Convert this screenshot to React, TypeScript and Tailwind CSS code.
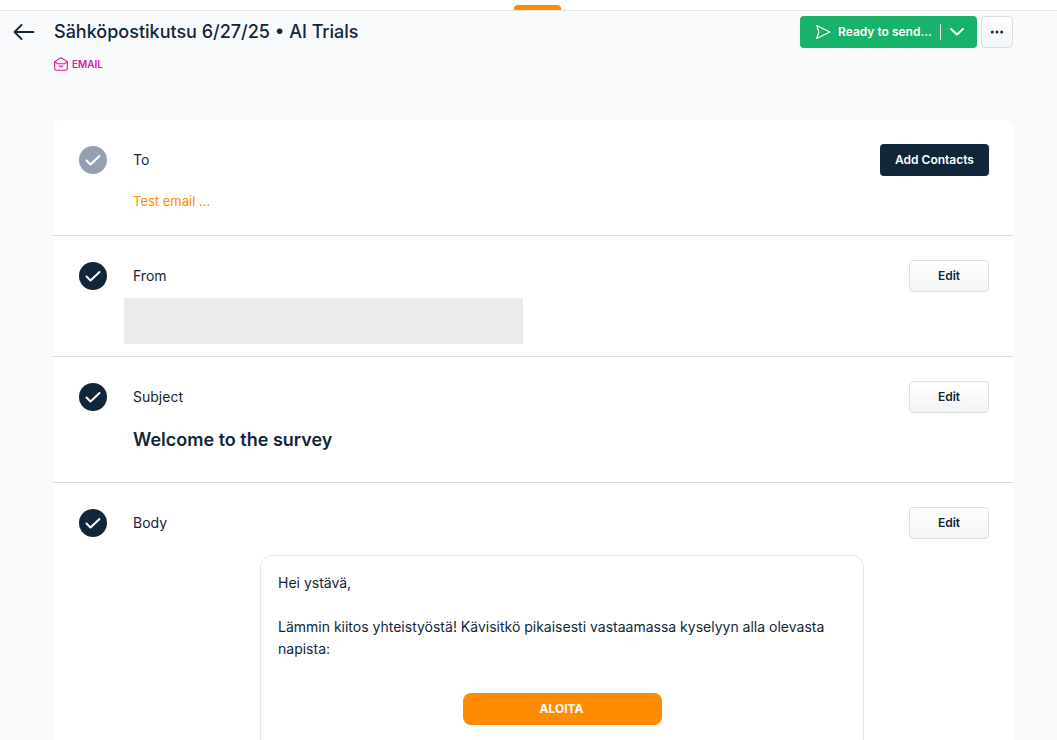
import { Ellipsis } from 'lucide-react';

const font = { fontFamily: 'Inter, sans-serif' };

function StepIcon({ muted }: { muted?: boolean }) {
    return (
        <div className={`${muted ? 'bg-[#94a0ad]' : 'bg-[#12263a]'} w-7 h-7 rounded-full flex items-center justify-center shrink-0`}>
            <svg className="w-4 h-4" viewBox="0 0 16 16" fill="none" stroke="white" strokeWidth="2" strokeLinecap="round" strokeLinejoin="round">
                <path d="M1.500 8.500 5.500 12.500 14.500 4" />
            </svg>
        </div>
    );
}

function EditButton() {
    return (
        <button className="w-20 h-8 rounded border border-[#dcdfe3] bg-gradient-to-b from-white to-[#f3f4f5] text-xs font-semibold text-[#12263a]">
            Edit
        </button>
    );
}

function StepHeader({ label, muted, action }: { label: string; muted?: boolean; action: React.ReactNode }) {
    return (
        <div className="flex items-center h-8 pl-[26px] pr-6">
            <StepIcon muted={muted} />
            <span className="ml-[26px] text-sm font-normal text-[#12263a]">{label}</span>
            <div className="ml-auto">{action}</div>
        </div>
    );
}

export default function App() {
    return (
        <div className="h-[740px] overflow-hidden bg-[#f9fafc] antialiased" style={font}>
            <div className="h-[11px] bg-white border-b border-[#dfe3e8] flex justify-center">
                <div className="w-[47px] h-[5px] mt-[5px] ml-[18px] rounded-t bg-[#ff8c00]"></div>
            </div>

            <div className="flex items-start h-[109px] pl-[13px] pr-[44px]">
                <svg className="w-[22px] h-[18px] mt-[12px] shrink-0" viewBox="0 0 22 18" fill="none" stroke="#12263a" strokeWidth="1.8" strokeLinecap="round" strokeLinejoin="round">
                    <path d="M20.500 9H1.500M8.500 2 1.500 9l7 7" />
                </svg>
                <div className="ml-[19px] pt-[7px]">
                    <h1 className="text-lg leading-[27px] font-medium text-[#12263a]">Sähköpostikutsu 6/27/25 • AI Trials</h1>
                    <div className="mt-[11px] flex items-center gap-[4px]">
                        <svg className="w-[14px] h-[14px]" viewBox="0 0 14 14" fill="none" stroke="#d917a0" strokeWidth="1.100" strokeLinejoin="round" strokeLinecap="round">
                            <path d="M.700 4.800 7 .600l6.300 4.200v6.900a1.600 1.600 0 0 1-1.600 1.600H2.300A1.600 1.600 0 0 1 .700 11.700z" />
                            <path d="M.800 5.200c1.300.2 2 .6 2.600 1.500h7.200c.6-.9 1.300-1.300 2.600-1.500" />
                            <path d="m5.300 8.700 1.700 1.200 1.700-1.200" />
                        </svg>
                        <span className="text-[10px] leading-4 font-semibold text-[#d917a0]">EMAIL</span>
                    </div>
                </div>
                <div className="ml-auto mt-[5px] flex items-center gap-1">
                    <div className="flex items-center w-[177px] h-8 rounded bg-[#19b26b] text-white pl-[15px]">
                        <svg className="w-4 h-4 shrink-0" viewBox="0 0 16 16" fill="none" stroke="currentColor" strokeWidth="1.100" strokeLinejoin="round">
                            <path d="M1.500 1.500 15 8 1.500 14.500 4 8z" />
                        </svg>
                        <span className="ml-[7px] text-xs font-semibold whitespace-nowrap">Ready to send...</span>
                        <span className="ml-[8px] w-px h-4 bg-white"></span>
                        <svg className="ml-[8px] w-4 h-4 shrink-0" viewBox="0 0 16 16" fill="none" stroke="currentColor" strokeWidth="2" strokeLinecap="round" strokeLinejoin="round">
                            <path d="M2 5l6 5.500L14 5" />
                        </svg>
                    </div>
                    <button className="w-8 h-8 rounded border border-[#dcdfe3] bg-gradient-to-b from-white to-[#f3f4f5] flex items-center justify-center">
                        <Ellipsis className="w-4 h-4 text-[#12263a]" strokeWidth={2.5} />
                    </button>
                </div>
            </div>

            <div className="ml-[53px] mr-[44px] bg-white rounded-t-lg">
                <section className="h-[116px] pt-6 border-b border-[#d8dfe3]">
                    <StepHeader
                        label="To"
                        muted
                        action={
                            <button className="w-[109px] h-8 rounded bg-[#12263a] text-white text-xs font-semibold">Add Contacts</button>
                        }
                    />
                    <p className="ml-20 mt-[17px] text-[13px] leading-4 text-[#ff8c00]">Test email ...</p>
                </section>

                <section className="h-[121px] pt-6 border-b border-[#d8dfe3]">
                    <StepHeader label="From" action={<EditButton />} />
                    <div className="ml-[71px] mt-[6px] w-[399px] h-[46px] bg-[#ebebeb]"></div>
                </section>

                <section className="h-[126px] pt-6 border-b border-[#d8dfe3]">
                    <StepHeader label="Subject" action={<EditButton />} />
                    <h2 className="ml-20 mt-[13px] text-lg leading-[27px] font-semibold text-[#12263a]">Welcome to the survey</h2>
                </section>

                <section className="pt-6">
                    <StepHeader label="Body" action={<EditButton />} />
                    <div className="ml-[207px] w-[604px] h-[300px] mt-[16px] rounded-xl border border-[#efe6dc] pt-[16px] pl-[17px] pr-4 text-sm leading-[22px] text-[#12263a]">
                        <p>Hei ystävä,</p>
                        <p className="mt-[22px]">Lämmin kiitos yhteistyöstä! Kävisitkö pikaisesti vastaamassa kyselyyn alla olevasta napista:</p>
                        <div className="mt-[33px] flex justify-center">
                            <div className="w-[199px] h-8 rounded-lg bg-[#ff8c00] text-white text-xs font-bold flex items-center justify-center pr-[2px]">ALOITA</div>
                        </div>
                    </div>
                </section>
            </div>
        </div>
    );
}
